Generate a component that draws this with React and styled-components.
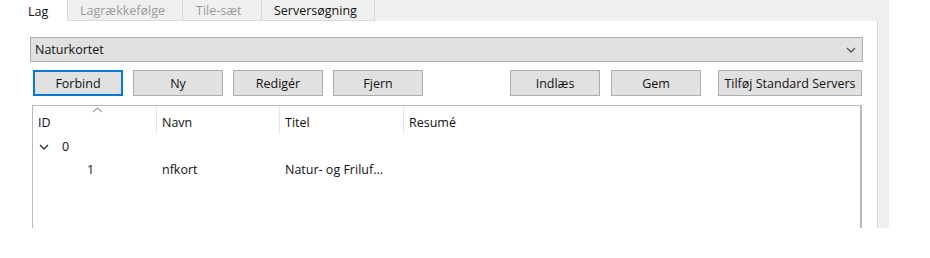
import styled, { createGlobalStyle } from 'styled-components';

const GlobalStyle = createGlobalStyle`
  body {
    margin: 0;
    background: #ffffff;
    font-family: "Open Sans", "Noto Sans", "Liberation Sans", sans-serif;
    font-size: 12.5px;
    color: #111111;
  }
`;

const Window = styled.div`
  width: 889px;
  height: 228px;
  background: #f0f0f0;
  display: flex;
  flex-direction: column;
`;

const TabBar = styled.div`
  height: 21px;
  display: flex;
  align-items: stretch;
`;

const Tab = styled.div`
  width: ${(p) => p.$w}px;
  box-sizing: border-box;
  display: flex;
  align-items: center;
  padding: 1px 0 0 ${(p) => p.$pad}px;
  background: ${(p) => (p.$active ? '#ffffff' : '#f0f0f0')};
  border-right: 1px solid #d9d9d9;
  border-bottom: ${(p) => (p.$active ? 'none' : '1px solid #d9d9d9')};
  color: ${(p) => (p.$disabled ? '#9a9a9a' : '#111111')};
  white-space: nowrap;
`;

const Panel = styled.div`
  flex: 1;
  width: 878px;
  box-sizing: border-box;
  background: #ffffff;
  border-right: 1px solid #dadada;
  padding: 16px 14px 0 30px;
  display: flex;
  flex-direction: column;
`;

const Select = styled.div`
  height: 25px;
  box-sizing: border-box;
  background: #e1e1e1;
  border: 1px solid #adadad;
  display: flex;
  align-items: center;
  justify-content: space-between;
  padding: 0 6px 0 4px;
`;

const ButtonRow = styled.div`
  margin: 8px 1px 0 3px;
  display: flex;
  align-items: center;
`;

const Button = styled.div`
  width: ${(p) => p.$w || 90}px;
  height: 26px;
  box-sizing: border-box;
  background: #e1e1e1;
  border: ${(p) => (p.$focus ? '2px solid #0078d7' : '1px solid #adadad')};
  display: flex;
  align-items: center;
  justify-content: center;
  margin-left: ${(p) => p.$gap || 0}px;
  white-space: nowrap;
`;

const ListBox = styled.div`
  flex: 1;
  margin: 9px 1px 0 2px;
  border: 1px solid #b9b9c4;
  border-right-width: 2px;
  border-bottom: none;
  position: relative;
`;

const Header = styled.div`
  height: 28px;
  display: grid;
  grid-template-columns: 124px 123px 124px 1fr;
  position: relative;
`;

const HeadCell = styled.div`
  display: flex;
  align-items: center;
  padding-left: 5px;
  padding-top: 4px;
  border-right: ${(p) => (p.$last ? 'none' : '1px solid #e5e5e5')};
`;

const SortArrow = styled.svg`
  position: absolute;
  left: 59px;
  top: 1px;
`;

const Row = styled.div`
  height: 21px;
  display: grid;
  grid-template-columns: 124px 123px 124px 1fr;
  align-items: center;
  padding-top: 2px;
`;

const Cell = styled.div`
  padding-left: ${(p) => p.$pad || 5}px;
  display: flex;
  align-items: center;
  white-space: nowrap;
`;

const Chevron = ({ color = '#333', w = 10 }) => (
  <svg width={w} height="6" viewBox="0 0 10 6">
    <path d="M1 1 L5 5 L9 1" fill="none" stroke={color} strokeWidth="1.4" />
  </svg>
);

export default function App() {
  return (
    <>
      <GlobalStyle />
      <Window>
        <TabBar>
          <Tab $w={68} $pad={28} $active>Lag</Tab>
          <Tab $w={115} $pad={12} $disabled>Lagrækkefølge</Tab>
          <Tab $w={79} $pad={13} $disabled>Tile-sæt</Tab>
          <Tab $w={113} $pad={12}>Serversøgning</Tab>
        </TabBar>
        <Panel>
          <Select>
            <span>Naturkortet</span>
            <Chevron color="#555" />
          </Select>
          <ButtonRow>
            <Button $focus>Forbind</Button>
            <Button $gap={10}>Ny</Button>
            <Button $gap={10}>Redigér</Button>
            <Button $gap={10}>Fjern</Button>
            <Button $gap={87}>Indlæs</Button>
            <Button $gap={11}>Gem</Button>
            <Button $gap={17} $w={144}>Tilføj Standard Servers</Button>
          </ButtonRow>
          <ListBox>
            <Header>
              <HeadCell>ID</HeadCell>
              <HeadCell>Navn</HeadCell>
              <HeadCell>Titel</HeadCell>
              <HeadCell $last>Resumé</HeadCell>
              <SortArrow width="11" height="6" viewBox="0 0 11 6">
                <path d="M1 5 L5.5 1 L10 5" fill="none" stroke="#a0a0a0" strokeWidth="1.2" />
              </SortArrow>
            </Header>
            <Row>
              <Cell $pad={6}>
                <Chevron />
                <span style={{ marginLeft: 13 }}>0</span>
              </Cell>
            </Row>
            <Row>
              <Cell $pad={54}>1</Cell>
              <Cell>nfkort</Cell>
              <Cell>Natur- og Friluf...</Cell>
              <Cell />
            </Row>
          </ListBox>
        </Panel>
      </Window>
    </>
  );
}
